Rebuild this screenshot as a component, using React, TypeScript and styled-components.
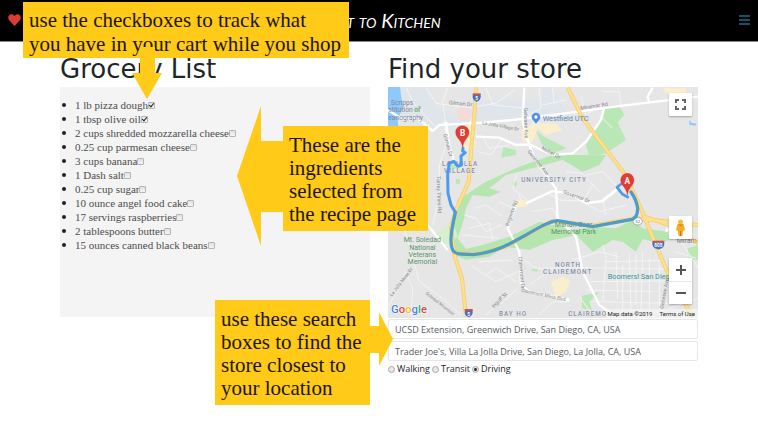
import React from "react";
import styled, { createGlobalStyle } from "styled-components";

const yellow = "#ffca18";

const GlobalStyle = createGlobalStyle`
  *, *::before, *::after { box-sizing: border-box; }
  body { margin: 0; background: #fff; color: #212529; }
`;

const Page = styled.div`
  position: relative;
  min-height: 100vh;
`;

const Header = styled.header`
  display: grid;
  grid-template-columns: 1fr auto 1fr;
  align-items: center;
  height: 42px;
  padding: 0 8px 2px;
  background: #000;
  border-bottom: 1px solid #8a8a8a;
`;

const IconButton = styled.button<{ $end?: boolean; $color: string }>`
  display: flex;
  justify-self: ${(p) => (p.$end ? "end" : "start")};
  padding: 0;
  border: 0;
  background: none;
  color: ${(p) => p.$color};
`;

const Brand = styled.a`
  color: #fff;
  font: italic small-caps 20px/24px "Lato", sans-serif;
  text-decoration: none;
`;

const Columns = styled.main`
  display: grid;
  grid-template-columns: 1fr 1fr;
  gap: 18px;
  padding: 12px 60px 0;
`;

const Column = styled.section`
  min-width: 0;
`;

const Title = styled.h1`
  margin: 0;
  height: 33px;
  font: 400 26px/30px "DejaVu Sans", sans-serif;
  white-space: nowrap;
`;

const ListPanel = styled.div`
  min-height: 230px;
  padding: 11px 0 0 15px;
  background: #f4f4f4;
`;

const Ingredients = styled.ul`
  margin: 0;
  padding: 0;
  color: #4c4c4c;
  font: 11px/14px "Liberation Serif", serif;
  list-style: none;
`;

const Ingredient = styled.li`
  display: flex;
  align-items: center;
  height: 14px;

  &::before {
    content: "";
    width: 4px;
    height: 4px;
    margin: 0 9px 0 -13px;
    border-radius: 50%;
    background: #222;
  }
`;

const IngredientLabel = styled.label`
  display: flex;
  align-items: center;
`;

const Check = styled.input`
  appearance: none;
  position: relative;
  width: 7px;
  height: 7px;
  margin: 0;
  border: 1px solid #b5b5b5;
  border-radius: 1px;
  background: linear-gradient(#e2e2e2, #f4f4f4);

  &:checked::after {
    content: "";
    position: absolute;
    left: 1px;
    top: -1px;
    width: 3px;
    height: 5px;
    border: solid #222;
    border-width: 0 1px 1px 0;
    transform: rotate(40deg);
  }
`;

const MapFrame = styled.div`
  position: relative;
  overflow: hidden;
  background: #e6e6e6;
`;

const MapDrawing = styled.svg`
  display: block;
  width: 100%;
  height: auto;
  font-family: Roboto, sans-serif;
`;

const MapControls = styled.div`
  position: absolute;
  inset: 6px 6px 14px auto;
  display: flex;
  flex-direction: column;
`;

const MapButton = styled.button<{ $push?: boolean }>`
  display: flex;
  align-items: center;
  justify-content: center;
  width: 23px;
  height: 23px;
  margin: ${(p) => (p.$push ? "auto 0 19px" : "0")};
  padding: 0;
  border: 0;
  border-radius: 1px;
  background: #fff;
  box-shadow: 0 1px 2px rgba(0, 0, 0, 0.3);
`;

const ZoomGroup = styled.div`
  display: grid;
  background: #fff;
  box-shadow: 0 1px 2px rgba(0, 0, 0, 0.3);

  ${MapButton} { box-shadow: none; }
  ${MapButton} + ${MapButton} { border-top: 1px solid #e6e6e6; }
`;

const MapCredits = styled.div`
  position: absolute;
  right: 0;
  bottom: 0;
  display: flex;
  gap: 7px;
  padding: 0 3px 0 2px;
  background: rgba(245, 245, 245, 0.7);
  color: #222;
  font: 6px/9px Roboto, sans-serif;

  a { color: inherit; text-decoration: none; }
`;

const Fields = styled.form`
  display: flex;
  flex-direction: column;
  padding-top: 1px;
`;

const PlaceInput = styled.input`
  width: 100%;
  height: 20px;
  margin-bottom: 2px;
  padding: 0 6px;
  border: 1px solid #e6e6e6;
  border-radius: 2px;
  background: #fff;
  color: #555b61;
  font: 9px "Open Sans", sans-serif;
`;

const Modes = styled.div`
  display: flex;
  gap: 2px;
  margin-top: -1px;
  color: #212529;
  font: 9px/14px "Open Sans", sans-serif;
`;

const ModeLabel = styled.label`
  display: flex;
  align-items: center;
  gap: 2px;
`;

const Radio = styled.input`
  appearance: none;
  width: 7px;
  height: 7px;
  margin: 0;
  border: 1px solid #a8a8a8;
  border-radius: 50%;
  background: #e8e8e8;

  &:checked { background: radial-gradient(circle, #333 0 1px, #e8e8e8 2px); }
`;

const Note = styled.aside<{ $left: number; $top: number; $width: number; $compact?: boolean }>`
  position: absolute;
  left: ${(p) => p.$left}px;
  top: ${(p) => p.$top}px;
  width: ${(p) => p.$width}px;
  padding: ${(p) => (p.$compact ? "6px 0 2px 6px" : "8px 0 5px 6px")};
  background: ${yellow};
  color: #1c1503;
  font: 21px/${(p) => (p.$compact ? 24 : 23)}px "Liberation Serif", serif;
  white-space: nowrap;
`;

const NoteLine = styled.span`
  display: block;
`;

const Arrow = styled.svg<{ $left: number; $top: number }>`
  position: absolute;
  left: ${(p) => p.$left}px;
  top: ${(p) => p.$top}px;
  fill: ${yellow};
`;

const items: [string, boolean][] = [
  ["1 lb pizza dough", true],
  ["1 tbsp olive oil", true],
  ["2 cups shredded mozzarella cheese", false],
  ["0.25 cup parmesan cheese", false],
  ["3 cups banana", false],
  ["1 Dash salt", false],
  ["0.25 cup sugar", false],
  ["10 ounce angel food cake", false],
  ["17 servings raspberries", false],
  ["2 tablespoons butter", false],
  ["15 ounces canned black beans", false],
];

const minorRoads = [
  "M60 8 L80 50 L150 128 L178 110 L170 50 L185 8",
  "M120 8 L150 55 L250 68 L330 55 L385 15",
  "M178 110 L180 180 L160 240 L160 340 L140 420",
  "M300 8 L320 60 L420 70 L445 120",
  "M460 8 L465 70 L430 90 M500 8 L505 60 M470 60 L540 45",
  "M275 200 L315 210 L345 165 M290 155 L310 190 L370 180",
  "M10 300 L60 450 L100 590 L170 640 L225 690",
  "M60 560 L10 660 M60 560 L80 610 L75 690",
  "M235 390 L270 400 L300 440 L345 420 M250 430 L310 415 L320 465",
  "M265 370 L300 360 L350 395 M230 450 L340 460",
  "M390 270 L380 310 L430 350 M480 320 L520 345 L640 350 L690 310",
  "M540 260 L590 265 L640 320 M600 270 L650 260 L690 300",
  "M620 300 L590 350 L640 380 L720 360 M650 340 L660 390",
  "M260 545 L330 590 L395 560 M280 530 L380 525 M300 570 L330 550 L390 590",
  "M405 520 L450 550 L580 548 L845 552 M430 600 L490 560",
  "M340 660 L395 610 M300 690 L350 640 M460 690 L500 650 L550 650",
  "M650 480 L660 520 L650 650 M690 500 L695 640 M730 505 L735 680 M770 500 L765 690",
  "M610 590 L840 588 M600 615 L800 620 M620 650 L845 655 M660 530 L830 527",
  "M710 540 L710 680 M750 510 L750 660 M790 520 L790 690 M820 540 L820 690",
  "M560 525 L640 500 L700 515 M580 635 L620 690",
  "M640 90 L680 130 M585 35 L600 90 L660 50 M650 20 L700 20 L705 70",
  "M880 460 L936 550 M850 670 L936 640 M870 500 L930 520",
  "M440 380 L500 370 L515 400 M410 360 L400 330 M340 350 L380 370",
];

const majorRoads = [
  "M6 75 L45 100 L95 100 L140 138 L160 120 L290 113 L380 105 L560 82 L710 62 L936 35",
  "M270 155 L340 158 L390 180 L430 178 L500 210 L560 205 L600 170 L645 105 L655 68",
  "M415 8 L410 110 L430 180 L450 230 L510 310 L515 400 L570 455 L590 560 L640 660 L690 695",
  "M180 110 L190 185 L205 230 M65 420 L125 420 L185 495",
  "M420 355 L500 318 L550 325 L600 355 L650 348 L695 312",
  "M390 360 L365 430 L400 500 L405 600 L430 620 L550 645",
  "M800 8 L785 35 L790 55 M840 440 L846 430",
];

const highways = [
  "M270 8 L265 90 L255 200 L248 290 L210 375 L195 430 L205 510 L228 580 L240 695",
  "M545 8 L590 100 L715 265 L760 360 L850 575 L920 695",
  "M205 505 L280 507 L360 485 L500 408 L620 422 L750 400 L936 420",
  "M775 395 L850 420 L936 475",
];

function MapPicture() {
  return (
    <MapDrawing viewBox="6 6 930 693" role="img" aria-label="Driving route map">
      <rect x="6" y="6" width="930" height="693" fill="#e6e6e6" />
      <path d="M6 6 H130 L150 60 L220 100 L245 60 L340 40 L450 50 L470 6 H500 L540 80 L430 110 L290 105 L150 135 L60 110 Z" fill="#dfe5ea" />
      <path d="M6 6 H42 L50 70 L35 105 L40 150 H6 Z" fill="#8fc9fb" />
      <path d="M205 400 L215 345 L300 290 L400 245 L500 210 L660 210 L640 240 L590 260 L530 225 L455 245 L360 270 L310 310 L345 320 L310 335 L260 330 L240 370 L235 400 L215 460 L240 492 L290 480 L370 455 L460 410 L560 435 L620 425 L690 430 L740 405 L770 430 L845 440 L850 465 L820 475 L770 462 L750 500 L710 470 L680 465 L620 500 L570 450 L500 465 L430 495 L360 485 L310 515 L240 524 L200 508 Z" fill="#b6e6b0" />
      <path d="M650 75 L700 62 L715 90 L695 112 L720 165 L660 205 L610 215 L600 180 L640 115 Z M450 137 L475 155 L542 190 L500 205 L465 175 Z M352 187 L390 195 L390 210 L345 218 Z" fill="#b9e8b6" />
      <path d="M90 62 l18 2 -8 17 -16 -3Z M190 232 l20 0 5 20 -28 -2Z M210 282 h12 v14 h-12Z M588 632 L640 622 L610 650 L618 675 L588 670 Z M905 490 L936 480 V525 H908 Z M437 552 h18 v7 h-18Z M380 290 h12 v13 h-12Z" fill="#b9e8b6" />
      <path d="M150 440 L200 410 L215 455 L185 480 L150 465 Z" fill="#d8efcf" />
      <path d="M235 130 L265 90 L268 190 L235 195 Z M405 135 L440 115 L510 115 L530 135 L480 150 L455 130 L440 170 L410 170 Z M495 590 L530 575 L552 585 L540 620 L510 640 Z M385 345 L420 345 L425 365 L395 368 Z M830 10 h70 v15 h-60Z" fill="#fbeecb" />
      <path d="M215 75 L248 62 L255 95 L238 112 L215 100 Z" fill="#f6dada" />
      <path d="M910 105 l6 8 16 3 -4 6 -18 -3Z" fill="#8fc9fb" />
      <g fill="none" stroke="#f4f4f4" strokeWidth="3" strokeLinejoin="round">
        {minorRoads.map((d) => <path key={d} d={d} />)}
      </g>
      <g fill="none" stroke="#fff" strokeWidth="7" strokeLinejoin="round">
        {majorRoads.map((d) => <path key={d} d={d} />)}
      </g>
      <g fill="none" strokeLinejoin="round">
        {highways.map((d) => <path key={d} d={d} stroke="#f3ca68" strokeWidth="12" />)}
        {highways.map((d) => <path key={d} d={d} stroke="#fddf8d" strokeWidth="8" />)}
      </g>
      <g fill="#85858b" fontSize="16">
        <text x="188" y="58" transform="rotate(5 188 58)">Gilman Dr</text>
        <text x="288" y="118" transform="rotate(10 288 118)" fontSize="14">La Jolla Village Dr</text>
        <text x="413" y="68" transform="rotate(88 413 68)">Genesee Ave</text>
        <text x="172" y="148" transform="rotate(75 172 148)">Gilman Dr</text>
        <text x="424" y="200" transform="rotate(52 424 200)">Genesee Ave</text>
        <text x="465" y="193" transform="rotate(28 465 193)">Nobel Dr</text>
        <text x="584" y="75" transform="rotate(-9 584 75)">Miramar Rd</text>
        <text x="530" y="325" transform="rotate(20 530 325)">Governor Dr</text>
        <text x="152" y="274" transform="rotate(88 152 274)">Torrey Pines Rd</text>
        <text x="368" y="425" transform="rotate(-70 368 425)">Regents Rd</text>
        <text x="397" y="515" transform="rotate(85 397 515)">Clairemont Dr</text>
        <text x="405" y="620" transform="rotate(12 405 620)" fontSize="14">Clairemont Mesa Blvd</text>
        <text x="323" y="670" transform="rotate(-45 323 670)">Ingulf St</text>
        <text x="118" y="627" transform="rotate(38 118 627)" fontSize="13">Soledad Mountain</text>
        <text x="18" y="635" transform="rotate(-53 18 635)" fontSize="14">La Jolla Mesa Dr</text>
        <text x="832" y="672" transform="rotate(-80 832 672)">Genesee Ave</text>
      </g>
      <g fill="#858da5" stroke="#eeeeee" strokeWidth="2" paintOrder="stroke" fontSize="19" fontWeight="500" letterSpacing="3" textAnchor="middle">
        <text x="222" y="243">LA JOLLA</text>
        <text x="222" y="263">VILLAGE</text>
        <text x="504" y="291">UNIVERSITY CITY</text>
        <text x="546" y="547">NORTH</text>
        <text x="545" y="568">CLAIREMONT</text>
        <text x="381" y="692">BAY HO</text>
        <text x="605" y="692">CLAIREMO</text>
      </g>
      <g fill="#5b9564" fontSize="21" textAnchor="middle">
        <text x="109" y="472">Mt. Soledad</text>
        <text x="109" y="494">National</text>
        <text x="109" y="516">Veterans</text>
        <text x="109" y="538">Memorial</text>
        <text x="563" y="427">Marian Bear</text>
        <text x="563" y="448">Memorial Park</text>
      </g>
      <g fill="#7f8793" fontSize="20">
        <text x="15" y="60">Scripps</text>
        <text x="7" y="82">stitution of</text>
        <text x="7" y="104">eanography</text>
      </g>
      <text x="470" y="109" fill="#5b83b7" fontSize="22">Westfield UTC</text>
      <text x="665" y="582" fill="#38969c" fontSize="22">Boomers! San Dieg</text>
      <text x="872" y="475" fill="#7f8390" fontSize="21">Miram</text>
      <path d="M450 117 C446 108 437 105 437 96 A13 13 0 0 1 463 96 C463 105 454 108 450 117Z" fill="#4c8fe8" />
      <circle cx="450" cy="96" r="5" fill="#fff" />
      <g fill="#4772bd" stroke="#fff" strokeWidth="2">
        <path d="M260 26 Q272 31 284 26 Q290 45 272 52 Q254 45 260 26Z" />
        <path d="M236 673 Q248 678 260 673 Q266 692 248 698 Q230 692 236 673Z" />
        <path d="M799 468 Q817 475 835 468 Q842 489 817 495 Q792 489 799 468Z" />
      </g>
      <g fill="#d44e50">
        <rect x="260" y="25" width="24" height="6" />
        <rect x="236" y="672" width="24" height="6" />
        <rect x="799" y="467" width="36" height="6" />
      </g>
      <g fill="#fff" fontSize="14" fontWeight="700" textAnchor="middle">
        <text x="272" y="45">5</text>
        <text x="248" y="692">5</text>
        <text x="817" y="487">805</text>
      </g>
      <ellipse cx="755" cy="409" rx="14" ry="11" fill="#fff" stroke="#888" strokeWidth="2" />
      <text x="755" y="414" fill="#666" fontSize="13" textAnchor="middle">52</text>
      <g fill="none" strokeLinejoin="round" strokeLinecap="round">
        <path d="M208 382 C200 420 188 470 200 495 Q207 507 225 507 L262 509 C300 505 345 490 370 477 L420 450 C460 428 480 412 515 407 L620 425 L738 403 Q755 398 755 370 Q752 345 735 321" stroke="#4f9cc4" strokeWidth="10" />
        <path d="M231 190 L230 198 L238 203 L225 213 L226 240 L216 244 L204 229 L190 234 L185 270 L186 325 L195 360 L208 382" stroke="#4b9af0" strokeWidth="9" />
        <path d="M725 336 L710 328 L693 307 L704 298" stroke="#4b9af0" strokeWidth="8" />
      </g>
      <g fill="#e33c32" stroke="#b42d26" strokeWidth="1">
        <path d="M230 187 C227 164 209 160 209 142 A20 20 0 0 1 249 142 C249 160 232 164 230 187Z" />
        <path d="M724 330 C721 306 704 302 704 285 A20 20 0 0 1 744 285 C744 302 727 306 724 330Z" />
      </g>
      <g fill="#fff" fontSize="25" fontWeight="700" textAnchor="middle">
        <text x="230" y="152">B</text>
        <text x="724" y="296">A</text>
      </g>
      <text x="15" y="684" fontSize="34" fontWeight="500" stroke="#fff" strokeWidth="3" paintOrder="stroke">
        <tspan fill="#4285f4">G</tspan><tspan fill="#ea4335">o</tspan><tspan fill="#fbbc05">o</tspan><tspan fill="#4285f4">g</tspan><tspan fill="#34a853">l</tspan><tspan fill="#ea4335">e</tspan>
      </text>
    </MapDrawing>
  );
}

export default function App() {
  return (
    <>
      <GlobalStyle />
      <Page>
        <Header>
          <IconButton $color="#df3b36" aria-label="Favourites">
            <svg width="13" height="12" viewBox="0 0 26 24" fill="currentColor">
              <path d="M13 24 L2 12 C-3 4 6 -4 13 4 C20 -4 29 4 24 12Z" />
            </svg>
          </IconButton>
          <Brand href="#">Cart to Kitchen</Brand>
          <IconButton $end $color="#165064" aria-label="Menu">
            <svg width="11" height="10" viewBox="0 0 11 10" stroke="currentColor" strokeWidth="2">
              <path d="M0 1H11M0 5H11M0 9H11" />
            </svg>
          </IconButton>
        </Header>
        <Columns>
          <Column>
            <Title>Grocery List</Title>
            <ListPanel>
              <Ingredients>
                {items.map(([name, done]) => (
                  <Ingredient key={name}>
                    <IngredientLabel>
                      {name}
                      <Check type="checkbox" defaultChecked={done} />
                    </IngredientLabel>
                  </Ingredient>
                ))}
              </Ingredients>
            </ListPanel>
          </Column>
          <Column>
            <Title>Find your store</Title>
            <MapFrame>
              <MapPicture />
              <MapControls>
                <MapButton aria-label="Full screen">
                  <svg width="11" height="11" viewBox="0 0 11 11" fill="none" stroke="#666" strokeWidth="2">
                    <path d="M1 4V1H4M7 1H10V4M10 7V10H7M4 10H1V7" />
                  </svg>
                </MapButton>
                <MapButton $push aria-label="Street View">
                  <svg width="11" height="18" viewBox="0 0 22 36">
                    <path d="M5 10 H17 L20 22 L16 24 L15 34 H7 L6 24 L2 22Z" fill="#f5ac21" />
                    <circle cx="11" cy="6" r="5" fill="#f8bb3d" />
                    <path d="M6 11 H16 L11 14Z M10 24 H12 V34 H10Z" fill="#c9781d" />
                  </svg>
                </MapButton>
                <ZoomGroup>
                  <MapButton aria-label="Zoom in">
                    <svg width="10" height="10" viewBox="0 0 10 10" stroke="#555" strokeWidth="2">
                      <path d="M0 5H10M5 0V10" />
                    </svg>
                  </MapButton>
                  <MapButton aria-label="Zoom out">
                    <svg width="10" height="10" viewBox="0 0 10 10" stroke="#555" strokeWidth="2">
                      <path d="M0 5H10" />
                    </svg>
                  </MapButton>
                </ZoomGroup>
              </MapControls>
              <MapCredits>
                <span>Map data ©2019</span>
                <a href="#">Terms of Use</a>
              </MapCredits>
            </MapFrame>
            <Fields>
              <PlaceInput aria-label="Start" defaultValue="UCSD Extension, Greenwich Drive, San Diego, CA, USA" />
              <PlaceInput aria-label="Destination" defaultValue="Trader Joe's, Villa La Jolla Drive, San Diego, La Jolla, CA, USA" />
              <Modes>
                {["Walking", "Transit", "Driving"].map((mode) => (
                  <ModeLabel key={mode}>
                    <Radio type="radio" name="mode" defaultChecked={mode === "Driving"} />
                    {mode}
                  </ModeLabel>
                ))}
              </Modes>
            </Fields>
          </Column>
        </Columns>

        <Note $left={23} $top={2} $width={326} $compact>
          <NoteLine>use the checkboxes to track what</NoteLine>
          <NoteLine>you have in your cart while you shop</NoteLine>
        </Note>
        <Arrow $left={132} $top={47} width="30" height="52" viewBox="0 0 30 52">
          <path d="M8 0H23V26H30L15 52L0 26H8Z" />
        </Arrow>

        <Note $left={283} $top={126} $width={145}>
          <NoteLine>These are the</NoteLine>
          <NoteLine>ingredients</NoteLine>
          <NoteLine>selected from</NoteLine>
          <NoteLine>the recipe page</NoteLine>
        </Note>
        <Arrow $left={237} $top={106} width="46" height="140" viewBox="0 0 46 140">
          <path d="M0 70L24 0V35H46V106H24V140Z" />
        </Arrow>

        <Note $left={215} $top={300} $width={155}>
          <NoteLine>use these search</NoteLine>
          <NoteLine>boxes to find the</NoteLine>
          <NoteLine>store closest to</NoteLine>
          <NoteLine>your location</NoteLine>
        </Note>
        <Arrow $left={370} $top={312} width="23" height="54" viewBox="0 0 23 54">
          <path d="M0 14H9V0L23 27L9 54V41H0Z" />
        </Arrow>
      </Page>
    </>
  );
}
